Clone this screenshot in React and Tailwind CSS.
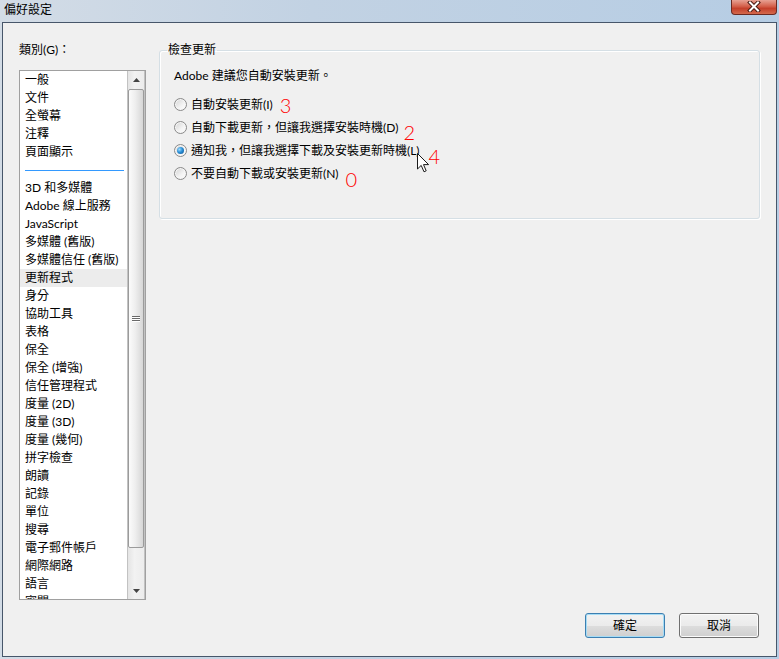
import React from 'react';

const categories = [
  '一般', '文件', '全螢幕', '注釋', '頁面顯示', null,
  '3D 和多媒體', 'Adobe 線上服務', 'JavaScript', '多媒體 (舊版)', '多媒體信任 (舊版)',
  '更新程式', '身分', '協助工具', '表格', '保全', '保全 (增強)', '信任管理程式',
  '度量 (2D)', '度量 (3D)', '度量 (幾何)', '拼字檢查', '朗讀', '記錄', '單位', '搜尋',
  '電子郵件帳戶', '網際網路', '語言', '審閱',
];

const options = [
  { label: '自動安裝更新(I)', mark: '3', markClass: 'ml-[3px] top-[0px]' },
  { label: '自動下載更新，但讓我選擇安裝時機(D)', mark: '2', markClass: 'ml-[1px] top-[4px]' },
  { label: '通知我，但讓我選擇下載及安裝更新時機(L)', mark: '4', markClass: 'ml-[5px] top-[5px]', checked: true, cursor: true },
  { label: '不要自動下載或安裝更新(N)', mark: '0', markClass: 'ml-[3px] top-[5px]' },
];

// Win7 風格的單選按鈕
const Radio = ({ checked }) => (
  <div className="w-[13px] h-[13px] shrink-0 rounded-full border border-[#8a8a8a] bg-[linear-gradient(135deg,#d2d2d2_0%,#f4f4f4_60%,#ffffff_100%)] flex items-center justify-center shadow-[inset_0_0_0_1px_#f6f6f6]">
    {checked && (
      <div className="w-[7px] h-[7px] rounded-full bg-[radial-gradient(circle_at_35%_35%,#9fdcff_0%,#2a8fd6_45%,#0c4e8c_100%)]" />
    )}
  </div>
);

const Cursor = () => (
  <svg width="13" height="20" viewBox="0 0 13 20" className="absolute left-[243px] top-[14px]">
    <path d="M0.5 0.5 L0.5 16 L4.2 12.4 L7 18.8 L9.2 17.8 L6.5 11.6 L11.6 11.6 Z" fill="#ffffff" stroke="#1a1a1a" strokeWidth="1" strokeLinejoin="round" />
  </svg>
);

const Scrollbar = () => (
  <div className="w-[18px] shrink-0 flex flex-col border-x border-[#c2c2c2] bg-[linear-gradient(to_right,#e4e4e4,#f2f2f2_40%,#ececec)]">
    <div className="h-[17px] flex items-center justify-center">
      <svg width="7" height="4" viewBox="0 0 7 4"><polygon points="0,4 3.5,0 7,4" fill="#444" /></svg>
    </div>
    <div className="flex-1 flex flex-col pt-[1px]">
      <div className="h-[459px] rounded-[2px] border border-[#9b9b9b] bg-[linear-gradient(to_right,#fbfbfb,#eeeeee_45%,#d6d6d6)] flex items-center justify-center">
        <div className="w-[8px] flex flex-col gap-[1px]">
          <div className="h-[1px] bg-[#6a6a6a] shadow-[0_1px_0_#fff]" />
          <div className="h-[1px] bg-[#6a6a6a] shadow-[0_1px_0_#fff]" />
          <div className="h-[1px] bg-[#6a6a6a] shadow-[0_1px_0_#fff]" />
        </div>
      </div>
    </div>
    <div className="h-[17px] flex items-center justify-center">
      <svg width="7" height="4" viewBox="0 0 7 4"><polygon points="0,0 7,0 3.5,4" fill="#444" /></svg>
    </div>
  </div>
);

const Button = ({ children, primary }) => (
  <button
    className={`w-[80px] h-[25px] rounded-[3px] border text-[12px] leading-[14px] text-black bg-[linear-gradient(to_bottom,#f2f2f2_0%,#ebebeb_50%,#dddddd_51%,#cfcfcf_100%)] ${
      primary
        ? 'border-[#3c7fb1] shadow-[inset_0_0_0_1px_#a6dcf5]'
        : 'border-[#707070] shadow-[inset_0_0_0_1px_#fbfbfb]'
    }`}
  >
    {children}
  </button>
);

export default function App() {
  return (
    <div className="w-[779px] h-[659px] overflow-hidden flex flex-col bg-[linear-gradient(to_right,#d3dce6,#c2d2e3_40%,#b6cde4)] font-['Lato','Noto_Sans_CJK_TC',sans-serif] text-[12px] text-black">
      {/* 標題列 */}
      <div className="h-[22px] shrink-0 flex items-start justify-between pl-[4px]">
        <span className="pt-[3px] leading-[14px]">偏好設定</span>
        <div className="w-[46px] h-[15px] mr-[2px] rounded-b-[4px] border border-t-0 border-[#6b2a22] bg-[linear-gradient(to_bottom,#e7a193_0%,#d4604b_45%,#c4402b_60%,#d46a4d_100%)] flex items-center justify-center">
          <svg width="14" height="11" viewBox="0 0 14 11" className="-mt-[2px]">
            <path d="M3 1.5 L11 9.5 M11 1.5 L3 9.5" stroke="#4a1b14" strokeWidth="4" strokeLinecap="square" />
            <path d="M3 1.5 L11 9.5 M11 1.5 L3 9.5" stroke="#ffffff" strokeWidth="2" strokeLinecap="square" />
          </svg>
        </div>
      </div>

      {/* 視窗內容 */}
      <div className="flex-1 mx-[2px] mb-[2px] border border-[#47566a] bg-[#f0f0f0] flex flex-col">
        <div className="flex items-start pl-[16px] pr-[16px]">
          {/* 類別 */}
          <div className="w-[127px] shrink-0 pt-[20px]">
            <div className="leading-[14px]">類別(G)：</div>
            <div className="mt-[13px] h-[530px] border border-[#a0a0a0] bg-white flex overflow-hidden">
              <div className="flex-1 min-w-0 overflow-hidden">
                {categories.map((name, i) =>
                  name === null ? (
                    <div key={i} className="h-[18px] flex items-center pl-[5px] pr-[3px]">
                      <div className="h-[1px] w-full bg-[#3399ff]" />
                    </div>
                  ) : (
                    <div
                      key={i}
                      className={`h-[18px] leading-[18px] pl-[5px] whitespace-nowrap ${name === '更新程式' ? 'bg-[#ececec]' : ''}`}
                    >
                      {name}
                    </div>
                  )
                )}
              </div>
              <Scrollbar />
            </div>
          </div>

          {/* 檢查更新 */}
          <fieldset className="ml-[13px] mt-[20px] flex-1 min-w-0 h-[176px] rounded-[3px] border border-[#d5dfe5] shadow-[inset_1px_1px_0_#ffffff,1px_1px_0_#ffffff] px-[14px]">
            <legend className="ml-[-7px] px-[1px] leading-[14px]">檢查更新</legend>
            <p className="pt-[11px] leading-[16px]">Adobe 建議您自動安裝更新。</p>
            <div className="mt-[9px] flex flex-col">
              {options.map((opt) => (
                <div key={opt.label} className="relative h-[23px] flex items-center gap-[4px]">
                  <Radio checked={opt.checked} />
                  <span className="leading-[16px] whitespace-nowrap">{opt.label}</span>
                  <span className={`relative font-['Lato',sans-serif] font-light text-[20px] leading-[20px] text-[#ff0000] ${opt.markClass}`}>
                    {opt.mark}
                  </span>
                  {opt.cursor && <Cursor />}
                </div>
              ))}
            </div>
          </fieldset>
        </div>

        <div className="mt-auto flex justify-end gap-[14px] pr-[17px] pb-[18px]">
          <Button primary>確定</Button>
          <Button>取消</Button>
        </div>
      </div>
    </div>
  );
}
